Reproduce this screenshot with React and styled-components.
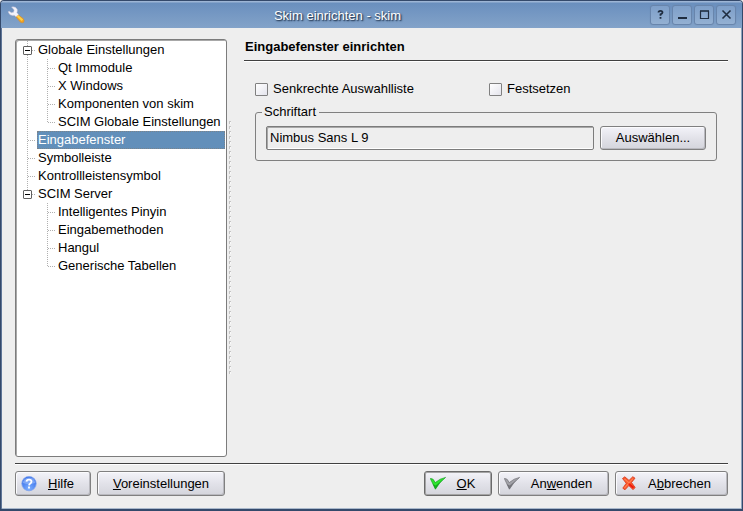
import React, { useState } from "react";
import styled, { createGlobalStyle, css } from "styled-components";

const GlobalStyle = createGlobalStyle`
  * { box-sizing: border-box; }
  body {
    margin: 0;
    background: #eeeeee;
    color: #000;
    font: 13px/18px "Liberation Sans", Arial, sans-serif;
  }
  button, input { font: inherit; color: inherit; }
`;

const Dialog = styled.div`
  display: flex;
  flex-direction: column;
  min-height: 100vh;
  background: #eeeeee;
  border: 1px solid #34496b;
  border-bottom-width: 2px;
  border-radius: 4px 4px 0 0;
  box-shadow: inset 1px 0 #5f7698, inset -1px 0 #8fa3bd, inset 0 -1px #a9b8cb;
`;

const TitleBar = styled.header`
  display: flex;
  align-items: center;
  height: 27px;
  padding: 0 6px;
  border-radius: 3px 3px 0 0;
  background: linear-gradient(#9db5d5 0 1px, #6a8fbe 2px, #83a3c9);
`;

const TitleSide = styled.div`
  display: flex;
  flex: ${(p) => (p.$end ? "0 0 auto" : "0 0 18px")};
  gap: 2px;
`;

const Title = styled.h1`
  flex: 1;
  margin: 0;
  padding-top: 2px;
  text-align: center;
  font-size: 13px;
  font-weight: 400;
  color: #fff;
  text-shadow: 1px 1px 1px #2f4562, 1px 1px 2px #2f4562;
`;

const WindowButton = styled.button`
  display: grid;
  place-items: center;
  width: 20px;
  height: 20px;
  padding: 0;
  border: 1px solid #6885ac;
  border-radius: 3px;
  background: linear-gradient(#7e9fc9, #93b0d2);
  box-shadow: 0 0 1px #6885ac;
`;

const Body = styled.main`
  display: flex;
  flex: 1;
  padding: 11px 14px 6px;
`;

const TreePane = styled.nav`
  flex: 0 0 212px;
  padding: 1px 1px 0;
  border: 1px solid #7c7c7c;
  border-radius: 3px;
  background: #fff;
  box-shadow: inset 1px 1px #a8a8a8;
`;

const Branch = styled.ul`
  margin: 0;
  padding: 0;
  list-style: none;
`;

const Row = styled.div`
  display: flex;
  height: 18px;
`;

const dotsDown = "repeating-linear-gradient(#b0b0b0 0 1px, transparent 1px 2px)";
const dotsAcross = "repeating-linear-gradient(90deg, #b0b0b0 0 1px, transparent 1px 2px)";

const Guide = styled.span`
  display: grid;
  place-items: center;
  flex: 0 0 20px;
  background-repeat: no-repeat;
  background-image: ${dotsDown}, ${dotsAcross};
  background-position: 10px 0, 11px 9px;
  background-size: ${(p) => {
    const down = { full: "1px 18px", half: "1px 9px", none: "0 0" }[p.$down];
    return `${down}, ${p.$across ? "8px 1px" : "0 0"}`;
  }};
`;

const Expander = styled.button`
  display: grid;
  place-items: center;
  width: 9px;
  height: 9px;
  margin-left: 1px;
  padding: 0;
  border: 1px solid #606060;
  border-radius: 1px;
  background: #fff;
`;

const Item = styled.button`
  flex: 1;
  padding: 0 1px;
  border: 0;
  background: none;
  text-align: left;
  white-space: nowrap;
  line-height: 18px;
  ${(p) =>
    p.$selected &&
    css`
      background: #628fba;
      color: #fff;
      outline: 1px dotted #7b8389;
      outline-offset: -1px;
    `}
`;

const Splitter = styled.div`
  display: flex;
  align-items: center;
  justify-content: center;
  flex: 0 0 7px;
`;

const Grip = styled.div`
  width: 3px;
  height: 255px;
  background: repeating-linear-gradient(transparent 0 3px, #eeeeee 3px 5px),
    repeating-linear-gradient(#c4c4c4 0 1px, transparent 1px 5px),
    linear-gradient(90deg, #c4c4c4 1px, #fafafa 1px);
  background-size: 100% 5px, 2px 5px, 2px 5px;
  background-repeat: repeat-y;
`;

const Page = styled.section`
  flex: 1;
  min-width: 0;
  padding-left: 10px;
`;

const Rule = styled.hr`
  height: 2px;
  margin: 0;
  border: 0;
  background: linear-gradient(#404040 1px, #fff 1px);
`;

const Heading = styled.h2`
  margin: 0;
  padding: 0 1px 5px;
  font-size: 13px;
  line-height: 16px;
`;

const Form = styled.div`
  display: flex;
  flex-direction: column;
  gap: 5px;
  padding: 18px 11px 0;
`;

const Options = styled.div`
  display: grid;
  grid-template-columns: 1fr 1fr;
  column-gap: 6px;
`;

const Option = styled.label`
  display: flex;
  align-items: center;
  gap: 5px;
`;

const CheckBox = styled.input`
  appearance: none;
  width: 13px;
  height: 13px;
  margin: 0;
  border: 1px solid #808080;
  border-radius: 1px;
  background: linear-gradient(135deg, #fff, #e4e4ec);
  &:checked { background: #628fba; }
`;

const Group = styled.fieldset`
  display: flex;
  gap: 6px;
  min-width: 0;
  margin: 0;
  padding: 5px 10px 10px;
  border: 1px solid #808080;
  border-radius: 3px;
`;

const Legend = styled.legend`
  margin-left: -4px;
  padding: 0 3px 0 2px;
`;

const FontField = styled.input`
  flex: 1;
  min-width: 0;
  height: 24px;
  padding: 0 3px 1px;
  border: 1px solid #7c7c7c;
  border-radius: 2px;
  background: #eeeeee;
  box-shadow: inset 1px 1px #a8a8a8, inset 0 -1px #fff;
`;

const PushButton = styled.button`
  display: flex;
  align-items: center;
  height: ${(p) => (p.$compact ? 24 : 25)}px;
  min-width: ${(p) => p.$width}px;
  padding: 0 5px;
  border: 1px solid #808080;
  border-radius: 3px;
  background: linear-gradient(#f3f3f9, #e2e2e9 50%, #d4d5dc);
  box-shadow: inset -1px -1px #b9b9bf, inset 1px 1px #fbfbfd;
  ${(p) =>
    p.$default &&
    css`
      border-color: #6a6a6a;
      box-shadow: inset 0 0 0 1px #a4a4a4;
    `}
  &:active { background: #d4d5dc; }
`;

const Caption = styled.span`
  flex: 1;
  text-align: center;
`;

const Footer = styled.footer`
  padding: 0 14px 13px;
`;

const ButtonRow = styled.div`
  display: flex;
  gap: 6px;
  padding-top: 6px;
`;

const Spacer = styled.div`
  flex: 1;
`;

function WrenchIcon() {
  return (
    <svg width="18" height="18" viewBox="0 0 18 18" aria-hidden="true">
      <path d="M8.6 10.6Q9 8.8 11 8.6L16.2 12.6Q18 14.6 16.6 16.4Q15 17.4 13.4 16.2Z" fill="#f3a21f" stroke="#c98a3c" strokeWidth=".5" />
      <path d="M10.4 9.8 15.4 14.2" stroke="#ffd24a" strokeWidth="2" />
      <path d="M4.6 1Q9 .2 10.2 3.4Q10.6 5.4 9.8 6.6L11.4 8.4 9 10.8 7.2 9.2Q2.6 10.2 1.2 5.8L2.2 5.2 4.4 6.8 6.6 6.2 7.2 4Z" fill="#f3f3fa" stroke="#cfc6d8" strokeWidth=".5" />
    </svg>
  );
}

const windowGlyphs = {
  Hilfe: <path d="M4.5 4.6Q4.5 2.8 6.5 2.8T8.5 4.4Q8.5 5.4 6.5 6.4V7.8M6.5 9V10.8" strokeWidth="1.8" />,
  Minimieren: <path d="M2 10H11" strokeWidth="2" />,
  Maximieren: (
    <>
      <path d="M2.5 3V10.5H10.5V3" strokeWidth="1.2" />
      <path d="M2 3H11" strokeWidth="1.6" />
    </>
  ),
  Schließen: <path d="M2.5 2.5 10.5 10.5M10.5 2.5 2.5 10.5" strokeWidth="1.6" />,
};

function WindowGlyph({ name }) {
  return (
    <svg width="13" height="13" viewBox="0 0 13 13" fill="none" stroke="#1f2d40" aria-hidden="true">
      {windowGlyphs[name]}
    </svg>
  );
}

function HelpIcon() {
  return (
    <svg width="16" height="16" viewBox="0 0 16 16" aria-hidden="true">
      <defs>
        <radialGradient id="helpFill" cx=".5" cy=".85" r=".8">
          <stop offset="0" stopColor="#7eb0ff" />
          <stop offset="1" stopColor="#2f68e8" />
        </radialGradient>
      </defs>
      <circle cx="8" cy="7.6" r="7.2" fill="url(#helpFill)" stroke="#7fa3ee" strokeWidth=".8" />
      <path d="M1.8 7Q2.5 2 8 1.6T14.2 7Q8 9 1.8 7Z" fill="#a9c6fb" opacity=".55" />
      <path d="M5.5 5.6Q5.6 3.6 8 3.6T10.5 5.6Q10.5 6.8 9.3 7.6T8 9.4M8 10.6V12.4" fill="none" stroke="#fff" strokeWidth="1.8" />
    </svg>
  );
}

function CheckIcon({ light, dark }) {
  return (
    <svg width="16" height="16" viewBox="0 0 16 16" aria-hidden="true">
      <path d="M.3 2.5Q2 2.4 3.4 3.6L5.2 6.6Q10 2.4 15.6 1.4Q9.5 6 5.4 13.2Z" fill={light} stroke={dark} strokeWidth=".6" strokeLinejoin="round" />
      <path d="M2.8 8 5.4 13.2Q9 7.2 12.6 4L5.6 9.6Z" fill={dark} opacity=".75" />
    </svg>
  );
}

function CancelIcon() {
  return (
    <svg width="16" height="16" viewBox="0 0 16 16" aria-hidden="true">
      <path d="M1.5 2.5 3.8 .8 8 4.4 11.8 .7 14 2.2 10.5 6.5 14.2 11.6 12 13.6 7.8 9.6 4 13.8 1.8 12.2 5.2 7.3Z" fill="#fb5a2c" stroke="#d8351a" strokeWidth=".8" strokeLinejoin="round" />
      <path d="M3.4 2.9 8 6.8 12 2.6M3.4 12 7 8" fill="none" stroke="#ff8258" strokeWidth="1.1" />
      <path d="M8 8 12.5 11.8" stroke="#ee1c10" strokeWidth="2" />
    </svg>
  );
}

const tree = [
  {
    name: "Globale Einstellungen",
    children: ["Qt Immodule", "X Windows", "Komponenten von skim", "SCIM Globale Einstellungen"],
  },
  { name: "Eingabefenster" },
  { name: "Symbolleiste" },
  { name: "Kontrollleistensymbol" },
  {
    name: "SCIM Server",
    children: ["Intelligentes Pinyin", "Eingabemethoden", "Hangul", "Generische Tabellen"],
  },
];

function TreeNode({ node, last, selected, onSelect }) {
  const [open, setOpen] = useState(true);
  const children = node.children || [];
  return (
    <li>
      <Row>
        <Guide $down={last ? "half" : "full"} $across>
          {children.length > 0 && (
            <Expander aria-label={node.name} aria-expanded={open} onClick={() => setOpen(!open)}>
              <svg width="5" height="7" viewBox="0 0 5 7" aria-hidden="true">
                <path d={open ? "M0 3.5H5" : "M0 3.5H5M2.5 1V6"} stroke="#000" />
              </svg>
            </Expander>
          )}
        </Guide>
        <Item $selected={selected === node.name} onClick={() => onSelect(node.name)}>{node.name}</Item>
      </Row>
      {open && children.length > 0 && (
        <Branch>
          {children.map((child, i) => (
            <li key={child}>
              <Row>
                <Guide $down={last ? "none" : "full"} />
                <Guide $down={i === children.length - 1 ? "half" : "full"} $across />
                <Item $selected={selected === child} onClick={() => onSelect(child)}>{child}</Item>
              </Row>
            </li>
          ))}
        </Branch>
      )}
    </li>
  );
}

export default function App() {
  const [selected, setSelected] = useState("Eingabefenster");
  return (
    <>
      <GlobalStyle />
      <Dialog>
        <TitleBar>
          <TitleSide><WrenchIcon /></TitleSide>
          <Title>Skim einrichten - skim</Title>
          <TitleSide $end>
            {Object.keys(windowGlyphs).map((name) => (
              <WindowButton key={name} aria-label={name}><WindowGlyph name={name} /></WindowButton>
            ))}
          </TitleSide>
        </TitleBar>
        <Body>
          <TreePane>
            <Branch>
              {tree.map((node, i) => (
                <TreeNode key={node.name} node={node} last={i === tree.length - 1} selected={selected} onSelect={setSelected} />
              ))}
            </Branch>
          </TreePane>
          <Splitter><Grip /></Splitter>
          <Page>
            <Heading>Eingabefenster einrichten</Heading>
            <Rule />
            <Form>
              <Options>
                <Option><CheckBox type="checkbox" />Senkrechte Auswahlliste</Option>
                <Option><CheckBox type="checkbox" />Festsetzen</Option>
              </Options>
              <Group>
                <Legend>Schriftart</Legend>
                <FontField aria-label="Schriftart" readOnly defaultValue="Nimbus Sans L 9" />
                <PushButton $width={106} $compact><Caption>Auswählen...</Caption></PushButton>
              </Group>
            </Form>
          </Page>
        </Body>
        <Footer>
          <Rule />
          <ButtonRow>
            <PushButton $width={76}><HelpIcon /><Caption><u>H</u>ilfe</Caption></PushButton>
            <PushButton $width={128}><Caption><u>V</u>oreinstellungen</Caption></PushButton>
            <Spacer />
            <PushButton $width={68} $default><CheckIcon light="#2ee52e" dark="#0b9a1a" /><Caption><u>O</u>K</Caption></PushButton>
            <PushButton $width={111}><CheckIcon light="#a2a2a8" dark="#66666c" /><Caption>An<u>w</u>enden</Caption></PushButton>
            <PushButton $width={113}><CancelIcon /><Caption>A<u>b</u>brechen</Caption></PushButton>
          </ButtonRow>
        </Footer>
      </Dialog>
    </>
  );
}
